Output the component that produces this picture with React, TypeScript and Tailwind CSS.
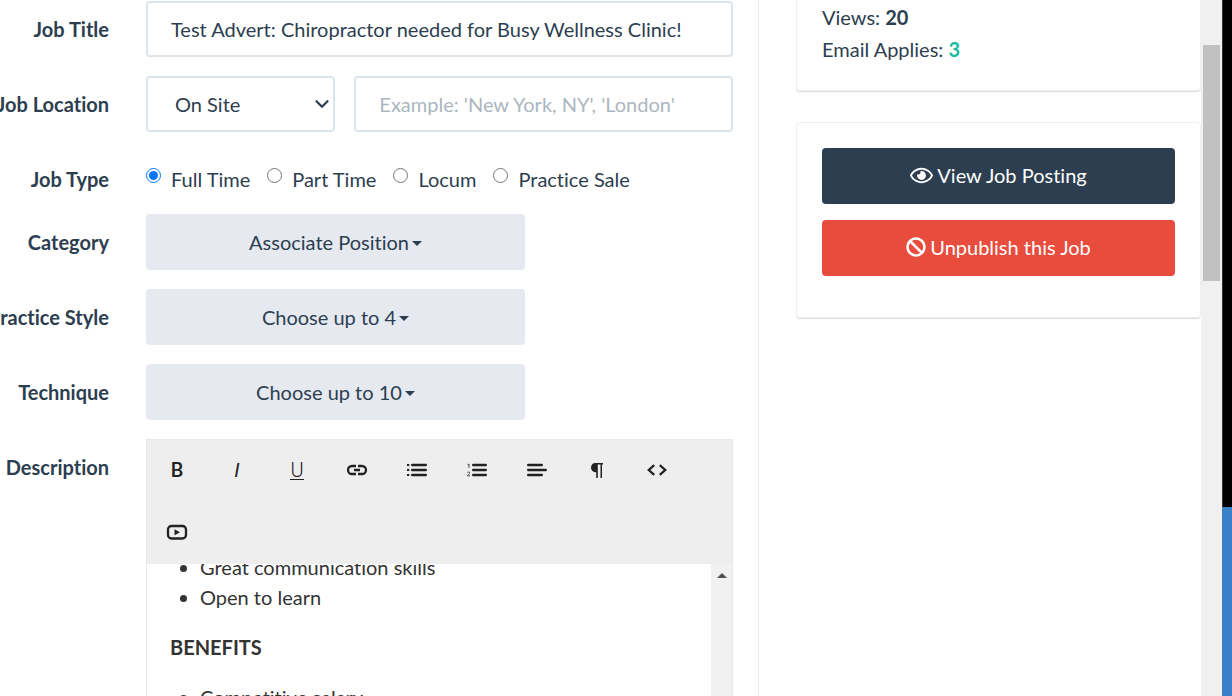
import type { ReactNode } from 'react'
import { ChevronDown } from 'lucide-react'
import { FaBan, FaRegEye } from 'react-icons/fa'

type FormRowProps = {
  label: string
  htmlFor?: string
  children: ReactNode
}

type ToolButton = {
  name: string
  icon: ReactNode
}

const JOB_TYPES = ['Full Time', 'Part Time', 'Locum', 'Practice Sale']

const PICKERS = [
  { id: 'category', label: 'Category', value: 'Associate Position' },
  { id: 'practice-style', label: 'Practice Style', value: 'Choose up to 4' },
  { id: 'technique', label: 'Technique', value: 'Choose up to 10' },
]

function ToolIcon({ children }: { children: ReactNode }) {
  return (
    <svg viewBox="0 0 24 24" className="size-6" fill="currentColor" aria-hidden="true">
      {children}
    </svg>
  )
}

const TOOLS: ToolButton[] = [
  { name: 'Bold', icon: <span className="font-medium">B</span> },
  { name: 'Italic', icon: <span className="italic">I</span> },
  {
    name: 'Underline',
    icon: <span className="border-b border-[#222] leading-[18px] font-light">U</span>,
  },
  {
    name: 'Insert link',
    icon: (
      <ToolIcon>
        <path
          d="M11 8H7a4 4 0 0 0 0 8h4M13 8h4a4 4 0 0 1 0 8h-4M9 12h6"
          fill="none"
          stroke="currentColor"
          strokeWidth="2.3"
        />
      </ToolIcon>
    ),
  },
  {
    name: 'Unordered list',
    icon: (
      <ToolIcon>
        <path d="M2 6h2.300v2H2zM2 11h2.300v2H2zM2 16h2.300v2H2z" />
        <path
          d="M7.300 7h13.400M7.300 12h13.400M7.300 17h13.400"
          stroke="currentColor"
          strokeWidth="2.6"
          strokeLinecap="round"
        />
      </ToolIcon>
    ),
  },
  {
    name: 'Ordered list',
    icon: (
      <ToolIcon>
        <path
          d="M8.300 7h12.400M8.300 12h12.400M8.300 17h12.400"
          stroke="currentColor"
          strokeWidth="2.6"
          strokeLinecap="round"
        />
        <path
          d="M2.500 6.800 4 6v4M2.500 14.800c0-1.200 2.200-1.200 2.200 0 0 1-2.200 2-2.200 3h2.500"
          fill="none"
          stroke="currentColor"
          strokeWidth="0.8"
        />
      </ToolIcon>
    ),
  },
  {
    name: 'Align',
    icon: (
      <ToolIcon>
        <path
          d="M3.300 7h13.400M3.300 12h17.400M3.300 17h13.400"
          stroke="currentColor"
          strokeWidth="2.6"
          strokeLinecap="round"
        />
      </ToolIcon>
    ),
  },
  {
    name: 'Paragraph format',
    icon: (
      <ToolIcon>
        <path d="M10.500 5H18v1.500h-1V20h-1.500V6.500h-2.700V20h-1.600v-5.800h-.7C7.600 14.200 6 12.200 6 9.600 6 7 7.900 5 10.500 5z" />
      </ToolIcon>
    ),
  },
  {
    name: 'Code view',
    icon: (
      <ToolIcon>
        <path
          d="M9.200 7.200 3.800 12l5.400 4.800M14.800 7.200l5.400 4.800-5.400 4.800"
          fill="none"
          stroke="currentColor"
          strokeWidth="2.3"
        />
      </ToolIcon>
    ),
  },
  {
    name: 'Insert video',
    icon: (
      <ToolIcon>
        <rect
          x="3"
          y="6"
          width="18"
          height="12.500"
          rx="3.500"
          fill="none"
          stroke="currentColor"
          strokeWidth="2.3"
        />
        <path d="M9.500 9.300v6l5.500-3z" />
      </ToolIcon>
    ),
  },
]

function FormRow({ label, htmlFor, children }: FormRowProps) {
  return (
    <div className="flex">
      <div className="flex w-[146px] shrink-0 justify-end pt-[13px] pr-[37px]">
        <label htmlFor={htmlFor} className="font-bold whitespace-nowrap">
          {label}
        </label>
      </div>
      <div className="min-w-0 flex-1">{children}</div>
    </div>
  )
}

function JobTypeRadios() {
  return (
    <div className="flex gap-[17px] pt-[13px] pb-px">
      {JOB_TYPES.map((type, i) => (
        <label key={type} className="flex items-start gap-[10px]">
          <input type="radio" name="job-type" defaultChecked={i === 0} className="mt-1 size-[15px]" />
          {type}
        </label>
      ))}
    </div>
  )
}

function DescriptionEditor() {
  return (
    <div className="border border-[#e9e9e9]">
      <div className="flex flex-wrap bg-[#eee] font-['Roboto',sans-serif] text-[#222]" role="toolbar">
        {TOOLS.map((tool) => (
          <button
            key={tool.name}
            type="button"
            aria-label={tool.name}
            className="flex h-[62px] w-[60px] items-center justify-center pb-0.5"
          >
            {tool.icon}
          </button>
        ))}
      </div>
      <div className="flex h-80 overflow-hidden bg-white text-[#333]">
        <div id="description" className="flex h-full flex-1 flex-col justify-start overflow-hidden px-[23px]">
          <ul className="-mt-3 list-disc pl-[30px]">
            <li>Great communication skills</li>
            <li>Open to learn</li>
          </ul>
          <p className="my-5 font-bold">BENEFITS</p>
          <ul className="list-disc pl-[30px]">
            <li>Competitive salary</li>
          </ul>
        </div>
        <div className="flex w-[21px] justify-center bg-[#f1f1f1] pt-[9px]">
          <svg viewBox="0 0 10 5" className="h-[5px] w-[10px]" fill="#505050" aria-hidden="true">
            <path d="M0 5 5 0l5 5z" />
          </svg>
        </div>
      </div>
    </div>
  )
}

function JobForm() {
  return (
    <form className="flex min-w-0 flex-1 flex-col gap-[19px] border-r border-[#e8ebee] pt-px pr-[25px]">
      <FormRow label="Job Title" htmlFor="job-title">
        <input
          id="job-title"
          type="text"
          defaultValue="Test Advert: Chiropractor needed for Busy Wellness Clinic!"
          className="h-14 w-full rounded-[4px] border-2 border-[#dce4ec] bg-white px-[23px]"
        />
      </FormRow>
      <FormRow label="Job Location" htmlFor="location-kind">
        <div className="grid grid-cols-[1fr_2fr] gap-[19px]">
          <div className="relative">
            <select
              id="location-kind"
              className="h-14 w-full appearance-none rounded-[4px] border-2 border-[#dce4ec] bg-white pl-[27px]"
            >
              <option>On Site</option>
            </select>
            <ChevronDown
              className="pointer-events-none absolute top-[17px] right-0.5 size-[22px]"
              strokeWidth={2.5}
              aria-hidden="true"
            />
          </div>
          <input
            type="text"
            aria-label="Job location"
            placeholder="Example: 'New York, NY', 'London'"
            className="h-14 w-full rounded-[4px] border-2 border-[#dce4ec] bg-white px-[23px] placeholder:text-[#acb6c0]"
          />
        </div>
      </FormRow>
      <FormRow label="Job Type">
        <JobTypeRadios />
      </FormRow>
      {PICKERS.map((picker) => (
        <FormRow key={picker.id} label={picker.label} htmlFor={picker.id}>
          <button
            id={picker.id}
            type="button"
            className="flex h-14 w-[379px] max-w-full items-center justify-center gap-[3px] rounded-[4px] bg-[#e6e9f0]"
          >
            {picker.value}
            <svg viewBox="0 0 10 5" className="mt-[3px] h-[5px] w-[10px]" fill="currentColor" aria-hidden="true">
              <path d="M0 0h10L5 5z" />
            </svg>
          </button>
        </FormRow>
      ))}
      <FormRow label="Description" htmlFor="description">
        <DescriptionEditor />
      </FormRow>
    </form>
  )
}

function Sidebar() {
  return (
    <aside className="flex w-[442px] shrink-0 flex-col gap-[31px] pl-[37px]">
      <section className="rounded-b-[4px] border border-t-0 border-[#ecf0f1] px-[25px] pt-px pb-[25px] shadow-[0_1px_1px_rgba(0,0,0,0.15)]">
        <p className="leading-8">
          Views: <strong>20</strong>
        </p>
        <p className="leading-8">
          Email Applies: <strong className="text-[#18bc9c]">3</strong>
        </p>
      </section>
      <section className="flex flex-col gap-4 rounded-[4px] border border-[#ecf0f1] px-[25px] pt-[25px] pb-[41px] shadow-[0_1px_1px_rgba(0,0,0,0.15)]">
        <button
          type="button"
          className="flex h-14 items-center justify-center gap-1 rounded-[4px] bg-[#2c3e50] pb-0.5 text-white"
        >
          <FaRegEye className="size-[23px]" />
          View Job Posting
        </button>
        <button
          type="button"
          className="flex h-14 items-center justify-center gap-1 rounded-[4px] bg-[#e74c3c] pb-0.5 text-white"
        >
          <FaBan className="size-5" />
          Unpublish this Job
        </button>
      </section>
    </aside>
  )
}

export default function App() {
  return (
    <div className="flex h-screen overflow-hidden bg-white font-['Lato',sans-serif] text-[20px] leading-[30px] text-[#2c3e50] [font-variant-ligatures:none]">
      <main className="flex min-w-0 flex-1">
        <JobForm />
        <Sidebar />
      </main>
      <div className="w-[21px] shrink-0 bg-[#f0f0f0] px-[2px] pt-[45px]">
        <div className="h-[236px] bg-[#c1c1c1]" />
      </div>
      <div className="flex w-[10px] shrink-0 flex-col border-l border-[#333] bg-black">
        <div className="h-[507px]" />
        <div className="-ml-px flex-1 bg-[#3a80c8]" />
      </div>
    </div>
  )
}
